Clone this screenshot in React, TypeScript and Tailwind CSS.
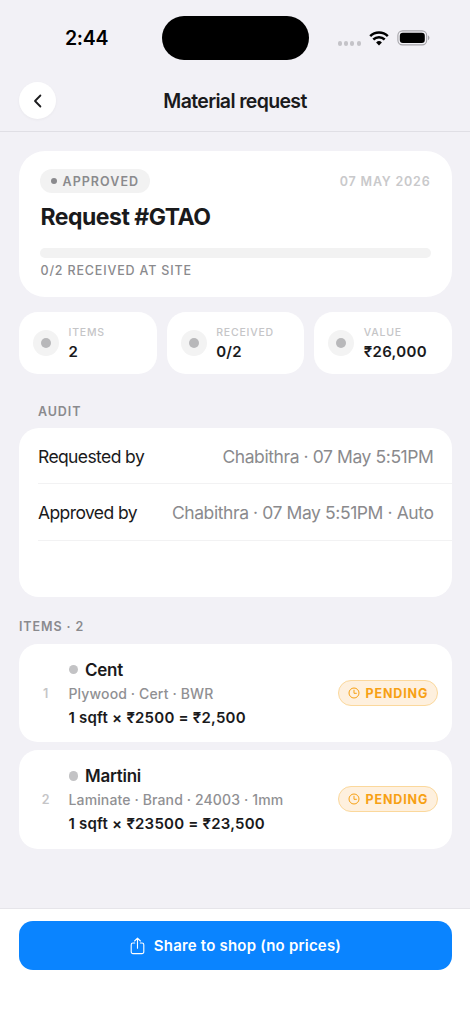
import React from 'react';

const stats = [
  { label: 'ITEMS', value: '2' },
  { label: 'RECEIVED', value: '0/2' },
  { label: 'VALUE', value: '₹26,000' },
];

const audit = [
  { label: 'Requested by', value: 'Chabithra · 07 May 5:51PM' },
  { label: 'Approved by', value: 'Chabithra · 07 May 5:51PM · Auto' },
];

const items = [
  { name: 'Cent', detail: 'Plywood · Cert · BWR', price: '1 sqft × ₹2500 = ₹2,500' },
  { name: 'Martini', detail: 'Laminate · Brand · 24003 · 1mm', price: '1 sqft × ₹23500 = ₹23,500' },
];

function StatusBar() {
  return (
    <div className="flex h-[74px] shrink-0 items-start pt-4">
      <div className="flex h-[44px] w-[162px] items-center pt-px pl-[65px] text-[19.5px] font-semibold tracking-[-0.3px] text-black">
        2:44
      </div>
      <div className="h-[43.5px] w-[147px] rounded-full bg-black" />
      <div className="flex h-[44px] items-center pl-[28.5px]">
        <div className="mt-[11px] flex gap-[2.200px]">
          {[0, 1, 2, 3].map((i) => (
            <span key={i} className="size-[4.2px] rounded-full bg-[#c4c3c8]" />
          ))}
        </div>
        <svg className="ml-[8px]" width="20" height="15" viewBox="0 0 20 15" fill="none" stroke="#000" strokeWidth="2.5">
          <path d="M1.2 5.1a12.6 12.6 0 0 1 17.6 0" />
          <path d="M4.3 8.5a8.2 8.2 0 0 1 11.4 0" />
          <path d="M10 14.4 7.1 11.4a4.2 4.2 0 0 1 5.8 0Z" fill="#000" stroke="none" />
        </svg>
        <svg className="ml-[8px]" width="34" height="16" viewBox="0 0 34 16">
          <rect x="0.9" y="0.9" width="28.8" height="14" rx="4.6" fill="none" stroke="#a5a4a9" strokeWidth="1.1" />
          <rect x="2.8" y="2.7" width="25" height="10.4" rx="3" fill="#000" />
          <path d="M31 5.6c1.9.7 1.9 3.9 0 4.6Z" fill="#a5a4a9" />
        </svg>
      </div>
    </div>
  );
}

function Header() {
  return (
    <header className="grid h-[58px] shrink-0 grid-cols-[37px_1fr_37px] items-start border-b border-[#e0dfe5] px-[19px] pt-2">
      <button className="flex size-[37px] items-center justify-center rounded-full bg-white shadow-[0_1px_3px_rgba(0,0,0,0.04)]">
        <svg width="10" height="14" viewBox="0 0 10 14" fill="none" stroke="#1c1c1e" strokeWidth="1.8" strokeLinecap="round" strokeLinejoin="round">
          <path d="M7.4 1.5 2 7l5.4 5.5" />
        </svg>
      </button>
      <h1 className="text-center text-[19.5px] leading-[39px] font-semibold tracking-[-0.65px]">Material request</h1>
    </header>
  );
}

function Summary() {
  return (
    <section className="h-[146px] rounded-[26px] bg-white px-[21px] pt-[18px]">
      <div className="flex h-6 items-center justify-between">
        <span className="flex h-6 w-[110px] items-center rounded-full bg-[#f2f2f2] pl-[10.5px] text-[12.5px] font-semibold tracking-[1.05px] text-[#8a8a8d]">
          <span className="mr-[6px] size-[6px] rounded-full bg-[#8a8a8d]" />
          <span className="pt-[2px]">APPROVED</span>
        </span>
        <span className="pt-[2px] pr-[0.5px] text-[12.5px] font-semibold tracking-[0.8px] text-[#c9c9cb]">07 MAY 2026</span>
      </div>
      <h2 className="mt-[10px] pl-[0.5px] text-[23px] leading-[28px] font-bold tracking-[-0.5px]">Request #GTAO</h2>
      <div className="mt-[17px] h-[9.5px] rounded-full bg-[#f2f2f2]" />
      <p className="mt-[5px] pl-[0.5px] text-[12.5px] leading-4 font-medium tracking-[0.83px] text-[#8a8a8d]">0/2 RECEIVED AT SITE</p>
    </section>
  );
}

function Stats() {
  return (
    <section className="mt-[15px] grid grid-cols-3 gap-[10px]">
      {stats.map((s) => (
        <div key={s.label} className="flex h-[62px] items-center rounded-[19px] bg-white pl-[14px]">
          <span className="flex size-[26px] items-center justify-center rounded-full bg-[#f3f3f3]">
            <span className="size-[10px] rounded-full bg-[#b8b8ba]" />
          </span>
          <div className="pl-[9.5px]">
            <div className="pt-px text-[10.5px] leading-[16px] font-medium tracking-[0.8px] text-[#c5c5c7]">{s.label}</div>
            <div className="mt-px text-[15px] leading-[20px] font-semibold tracking-[0.3px]">{s.value}</div>
          </div>
        </div>
      ))}
    </section>
  );
}

function Audit() {
  return (
    <section>
      <h3 className="mt-[30px] pl-[19px] text-[12.5px] leading-4 font-semibold tracking-[0.9px] text-[#8a8a8e]">AUDIT</h3>
      <div className="mt-[8px] h-[168.5px] rounded-[20px] bg-white pl-[19px]">
        {audit.map((r) => (
          <div key={r.label} className="flex h-[56.4px] items-center justify-between border-b border-[#f2f2f3] pt-[2px] pr-[18.5px] text-[17.5px]">
            <span className="tracking-[-0.6px]">{r.label}</span>
            <span className="tracking-[-0.41px] text-[#8a8a8d]">{r.value}</span>
          </div>
        ))}
      </div>
    </section>
  );
}

function PendingBadge() {
  return (
    <span className="flex h-[26px] w-[100px] items-center rounded-full border border-[#fbd89c] bg-[#fef0de] pl-[9px] text-[12.5px] font-bold tracking-[0.85px] text-[#f7a013]">
      <svg className="mr-[5.5px]" width="12" height="12" viewBox="0 0 12 12" fill="none" stroke="#f7a013" strokeWidth="1">
        <circle cx="6" cy="6" r="5" />
        <path d="M6 2.8V6.3h2.8" />
      </svg>
      <span className="pt-[2px]">PENDING</span>
    </span>
  );
}

function Items() {
  return (
    <section>
      <h3 className="mt-[22px] text-[12.5px] leading-4 font-semibold tracking-[0.9px] text-[#8a8a8e]">ITEMS · 2</h3>
      <div className="mt-[9.5px] flex flex-col gap-2">
        {items.map((it, i) => (
          <article key={it.name} className="flex h-[98.3px] items-center rounded-[19px] bg-white pr-[14px]">
            <span className="w-[49.5px] pt-[2px] pl-[4px] text-center text-[12.5px] font-semibold text-[#c5c5c7]">{i + 1}</span>
            <div className="flex-1">
              <div className="flex items-center text-[17px] leading-[22px] font-semibold tracking-[-0.25px]">
                <span className="mr-[7px] size-[9.5px] rounded-full bg-[#c3c3c5]" />
                {it.name}
              </div>
              <div className="mt-[3px] text-[14px] leading-[20px] font-medium tracking-[0.13px] text-[#909093]">{it.detail}</div>
              <div className="mt-[4px] text-[15px] leading-[20px] font-semibold tracking-[0.22px]">{it.price}</div>
            </div>
            <PendingBadge />
          </article>
        ))}
      </div>
    </section>
  );
}

export default function App() {
  return (
    <div className="flex h-[1024px] w-[470px] flex-col overflow-hidden bg-[#f2f1f6] font-['Inter','Liberation_Sans',sans-serif] text-[#1a1a1c]">
      <StatusBar />
      <Header />
      <main className="flex-1 pt-[19px] pr-[18px] pl-[19px]">
        <Summary />
        <Stats />
        <Audit />
        <Items />
      </main>
      <footer className="h-[116px] shrink-0 border-t border-[#e6e5ea] bg-white pt-[12px] pr-[18px] pl-[19px]">
        <button className="flex h-[49px] w-full items-center justify-center rounded-[14px] bg-[#0a84ff] text-[15px] font-semibold tracking-[0.2px] text-white">
          <svg className="mr-[9px]" width="15" height="18" viewBox="0 0 15 18" fill="none" stroke="#fff" strokeWidth="1.1" strokeLinecap="round" strokeLinejoin="round">
            <path d="M4.7 6H3a1.8 1.8 0 0 0-1.8 1.8v7A1.8 1.8 0 0 0 3 16.600h9a1.8 1.8 0 0 0 1.8-1.8v-7A1.8 1.8 0 0 0 12 6h-1.7" />
            <path d="M7.5 11.3V1.2M4.6 4l2.9-2.900L10.4 4" />
          </svg>
          <span className="pt-[2px]">Share to shop (no prices)</span>
        </button>
      </footer>
    </div>
  );
}
